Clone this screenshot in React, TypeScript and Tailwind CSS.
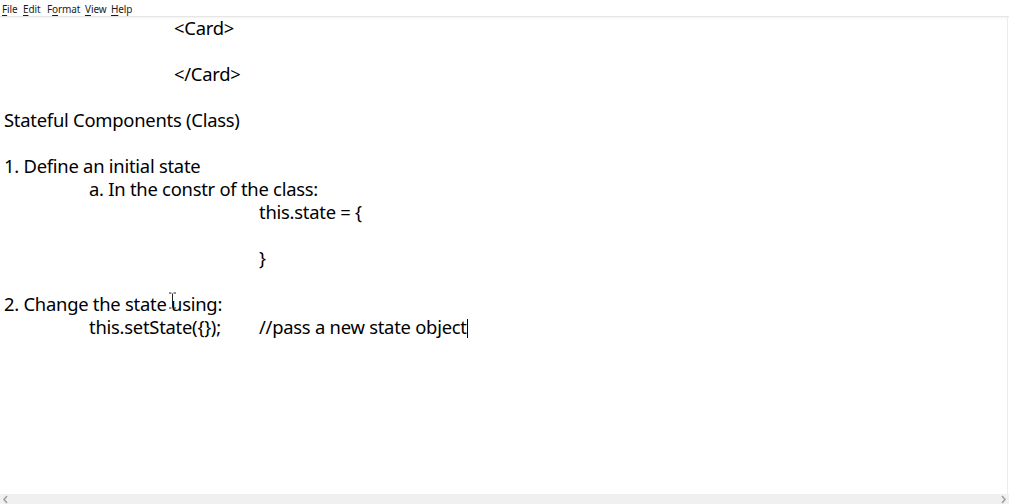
const TAB = 85;

type Seg = { tab: number; text: string };

const lines: Seg[][] = [
  [{ tab: 2, text: "<Card>" }],
  [],
  [{ tab: 2, text: "</Card>" }],
  [],
  [{ tab: 0, text: "Stateful Components (Class)" }],
  [],
  [{ tab: 0, text: "1. Define an initial state" }],
  [{ tab: 1, text: "a. In the constr of the class:" }],
  [{ tab: 3, text: "this.state = {" }],
  [],
  [{ tab: 3, text: "}" }],
  [],
  [{ tab: 0, text: "2. Change the state using:" }],
  [
    { tab: 1, text: "this.setState({});" },
    { tab: 3, text: "//pass a new state object" },
  ],
];

function Line({ segs, caret }: { segs: Seg[]; caret?: boolean }) {
  return (
    <div className="relative h-[23px] whitespace-pre">
      {segs.map((s, i) => (
        <span
          key={i}
          className="absolute top-0"
          style={{ left: s.tab * TAB }}
        >
          {s.text}
          {caret && i === segs.length - 1 && (
            <span className="inline-block w-px h-[19px] bg-black align-[-4px]" />
          )}
        </span>
      ))}
    </div>
  );
}

function MenuItem({ w, pre, u, post }: { w: string; pre: string; u: string; post: string }) {
  return (
    <span className={w}>
      {pre}
      <span className="underline underline-offset-2">{u}</span>
      {post}
    </span>
  );
}

export default function App() {
  return (
    <div
      className="relative flex h-[504px] w-[1009px] flex-col overflow-hidden bg-white text-black"
      style={{ fontFamily: '"Segoe UI", "Noto Sans", sans-serif' }}
    >
      <div className="flex h-[17px] items-center border-b border-[#e6e6e6] pl-[2px] pt-[2px] text-[10px] leading-none tracking-[-0.1px] text-[#1a1a1a] shadow-[0_1px_2px_rgba(0,0,0,0.06)]">
        <MenuItem w="w-[21px]" pre="" u="F" post="ile" />
        <MenuItem w="w-[24px]" pre="" u="E" post="dit" />
        <MenuItem w="w-[38px]" pre="F" u="o" post="rmat" />
        <MenuItem w="w-[26px]" pre="" u="V" post="iew" />
        <MenuItem w="w-[30px]" pre="" u="H" post="elp" />
      </div>

      <div className="relative flex flex-1">
        <div className="-mt-px flex-1 pl-[4px] text-[18.4px] leading-[23px] tracking-[-0.25px]">
          {lines.map((l, i) => (
            <Line key={i} segs={l} caret={i === lines.length - 1} />
          ))}
        </div>
        <div className="w-[2px] border-l border-[#ececec]" />

        {/* mouse I-beam */}
        <svg
          className="absolute left-[168px] top-[275px]"
          width="9"
          height="17"
          viewBox="0 0 9 17"
        >
          <path
            d="M1 1h2.5M5.5 1H8M4.5 1.5v14M1 16h2.5M5.5 16H8"
            stroke="#222"
            strokeWidth="1"
            fill="none"
          />
        </svg>
      </div>

      <div className="flex h-[10px] items-center justify-between bg-[#f0f0f0] px-[2px]">
        <svg width="7" height="9" viewBox="0 0 7 9">
          <path d="M5 1L2 4.5L5 8" stroke="#a0a0a0" strokeWidth="1.6" fill="none" />
        </svg>
        <svg width="7" height="9" viewBox="0 0 7 9">
          <path d="M2 1L5 4.5L2 8" stroke="#a0a0a0" strokeWidth="1.6" fill="none" />
        </svg>
      </div>
    </div>
  );
}
